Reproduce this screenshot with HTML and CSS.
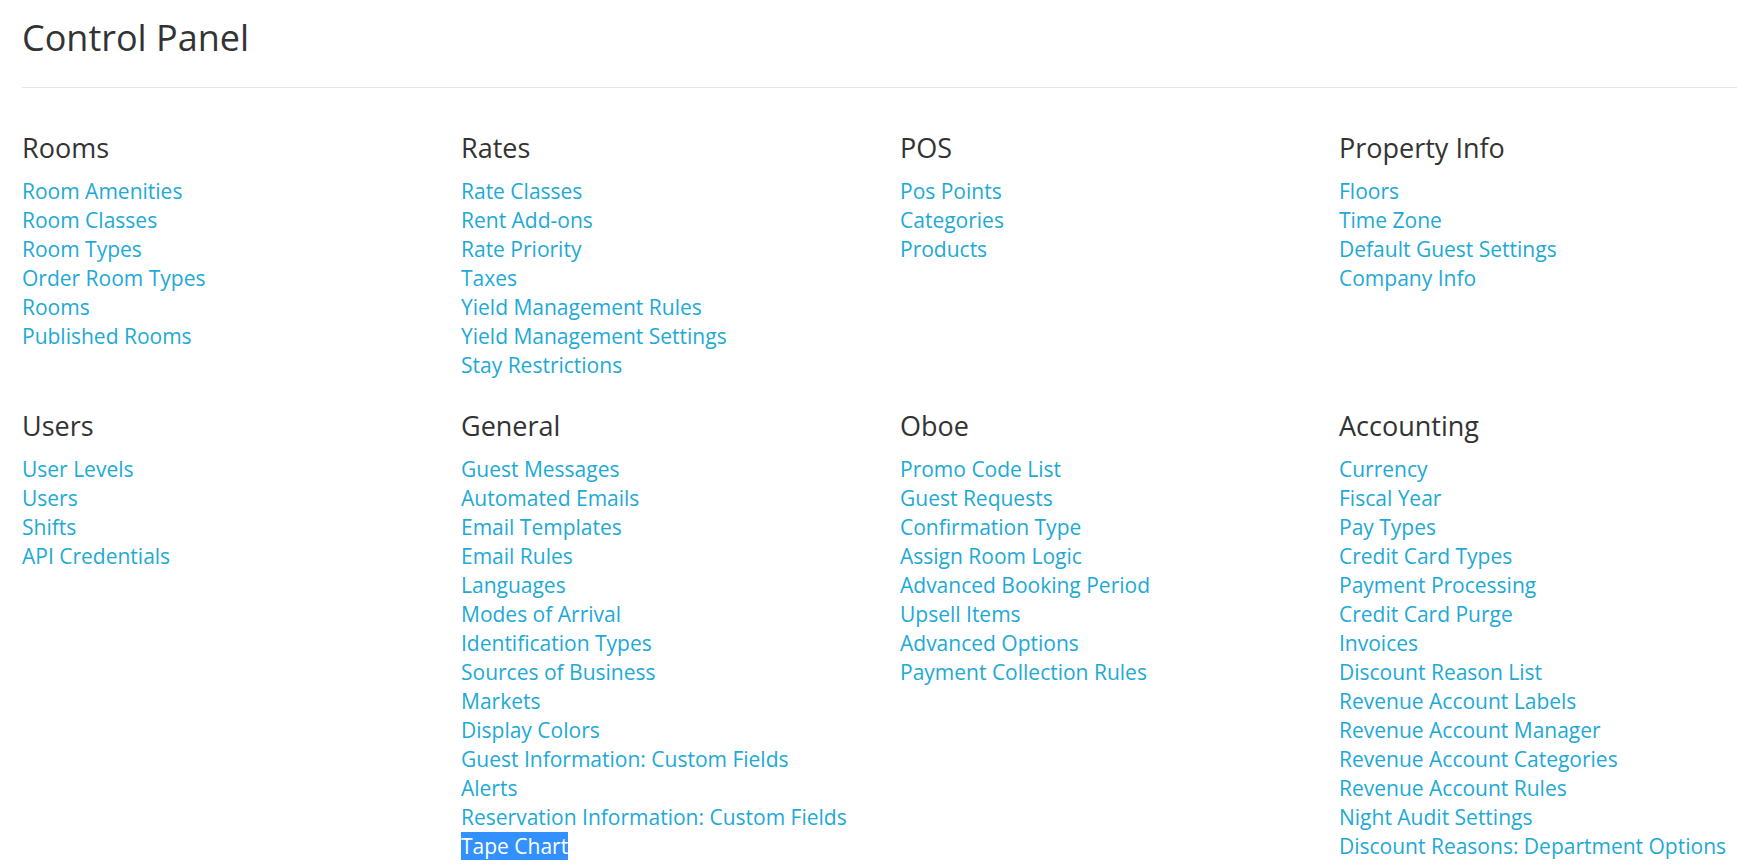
FILE: index.html
```html
<!DOCTYPE html>
<html>
<head>
<meta charset="utf-8">
<title>Control Panel</title>
<link rel="stylesheet" href="styles.css">
</head>
<body>
<div class="page">
  <h1 class="title">Control Panel</h1>
  <hr class="divider">
  <div class="grid">
    <section class="group">
      <h2 class="group-title">Rooms</h2>
      <ul class="links">
        <li><a href="#">Room Amenities</a></li>
        <li><a href="#">Room Classes</a></li>
        <li><a href="#">Room Types</a></li>
        <li><a href="#">Order Room Types</a></li>
        <li><a href="#">Rooms</a></li>
        <li><a href="#">Published Rooms</a></li>
      </ul>
    </section>
    <section class="group">
      <h2 class="group-title">Rates</h2>
      <ul class="links">
        <li><a href="#">Rate Classes</a></li>
        <li><a href="#">Rent Add-ons</a></li>
        <li><a href="#">Rate Priority</a></li>
        <li><a href="#">Taxes</a></li>
        <li><a href="#">Yield Management Rules</a></li>
        <li><a href="#">Yield Management Settings</a></li>
        <li><a href="#">Stay Restrictions</a></li>
      </ul>
    </section>
    <section class="group">
      <h2 class="group-title">POS</h2>
      <ul class="links">
        <li><a href="#">Pos Points</a></li>
        <li><a href="#">Categories</a></li>
        <li><a href="#">Products</a></li>
      </ul>
    </section>
    <section class="group">
      <h2 class="group-title">Property Info</h2>
      <ul class="links">
        <li><a href="#">Floors</a></li>
        <li><a href="#">Time Zone</a></li>
        <li><a href="#">Default Guest Settings</a></li>
        <li><a href="#">Company Info</a></li>
      </ul>
    </section>
    <section class="group">
      <h2 class="group-title">Users</h2>
      <ul class="links">
        <li><a href="#">User Levels</a></li>
        <li><a href="#">Users</a></li>
        <li><a href="#">Shifts</a></li>
        <li><a href="#">API Credentials</a></li>
      </ul>
    </section>
    <section class="group">
      <h2 class="group-title">General</h2>
      <ul class="links">
        <li><a href="#">Guest Messages</a></li>
        <li><a href="#">Automated Emails</a></li>
        <li><a href="#">Email Templates</a></li>
        <li><a href="#">Email Rules</a></li>
        <li><a href="#">Languages</a></li>
        <li><a href="#">Modes of Arrival</a></li>
        <li><a href="#">Identification Types</a></li>
        <li><a href="#">Sources of Business</a></li>
        <li><a href="#">Markets</a></li>
        <li><a href="#">Display Colors</a></li>
        <li><a href="#">Guest Information: Custom Fields</a></li>
        <li><a href="#">Alerts</a></li>
        <li><a href="#">Reservation Information: Custom Fields</a></li>
        <li><a href="#" class="selected">Tape Chart</a></li>
      </ul>
    </section>
    <section class="group">
      <h2 class="group-title">Oboe</h2>
      <ul class="links">
        <li><a href="#">Promo Code List</a></li>
        <li><a href="#">Guest Requests</a></li>
        <li><a href="#">Confirmation Type</a></li>
        <li><a href="#">Assign Room Logic</a></li>
        <li><a href="#">Advanced Booking Period</a></li>
        <li><a href="#">Upsell Items</a></li>
        <li><a href="#">Advanced Options</a></li>
        <li><a href="#">Payment Collection Rules</a></li>
      </ul>
    </section>
    <section class="group">
      <h2 class="group-title">Accounting</h2>
      <ul class="links">
        <li><a href="#">Currency</a></li>
        <li><a href="#">Fiscal Year</a></li>
        <li><a href="#">Pay Types</a></li>
        <li><a href="#">Credit Card Types</a></li>
        <li><a href="#">Payment Processing</a></li>
        <li><a href="#">Credit Card Purge</a></li>
        <li><a href="#">Invoices</a></li>
        <li><a href="#">Discount Reason List</a></li>
        <li><a href="#">Revenue Account Labels</a></li>
        <li><a href="#">Revenue Account Manager</a></li>
        <li><a href="#">Revenue Account Categories</a></li>
        <li><a href="#">Revenue Account Rules</a></li>
        <li><a href="#">Night Audit Settings</a></li>
        <li><a href="#">Discount Reasons: Department Options</a></li>
      </ul>
    </section>
  </div>
</div>
</body>
</html>
```

FILE: styles.css
```css
html, body {
  margin: 0;
  padding: 0;
  background: #ffffff;
  overflow: hidden;
}
body {
  font-family: "Open Sans", "Noto Sans", sans-serif;
  color: #333333;
}
.page {
  padding: 16px 0 0 22px;
}
.title {
  margin: 0;
  font-size: 36px;
  font-weight: 400;
  line-height: 44px;
  color: #333333;
}
.divider {
  margin: 27px 0 0 0;
  border: 0;
  border-top: 1px solid #e6e6e6;
  height: 0;
}
.grid {
  display: grid;
  grid-template-columns: repeat(4, 439px);
  row-gap: 31px;
  padding-top: 45px;
}
.group-title {
  margin: 0 0 13px 0;
  font-size: 27px;
  font-weight: 400;
  line-height: 30.8px;
  color: #333333;
}
.links {
  list-style: none;
  margin: 0;
  padding: 0;
  font-size: 21px;
  line-height: 29px;
}
.links a {
  color: #1ea9d6;
  text-decoration: none;
}
.links a.selected {
  background: #3390ff;
  color: #ffffff;
}
```
